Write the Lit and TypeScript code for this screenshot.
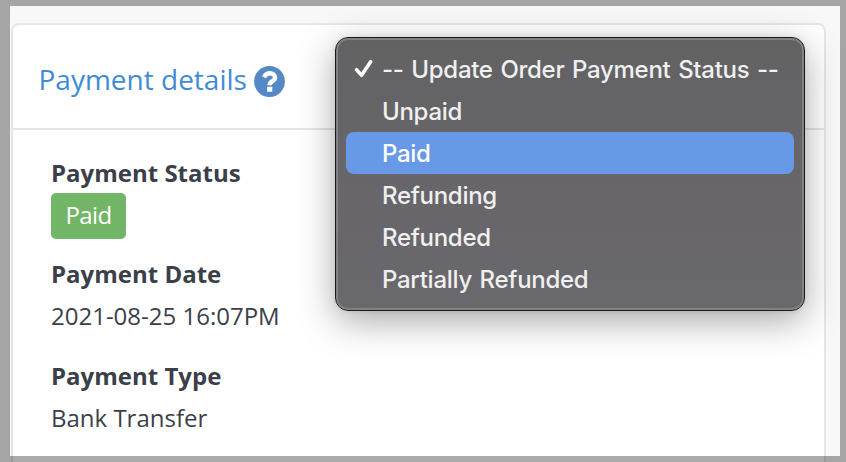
import { LitElement, html, css } from "lit";
import { customElement, state } from "lit/decorators.js";
import { classMap } from "lit/directives/class-map.js";

@customElement("status-menu")
class StatusMenu extends LitElement {
  @state() private active = 2;

  private options = [
    "-- Update Order Payment Status --",
    "Unpaid",
    "Paid",
    "Refunding",
    "Refunded",
    "Partially Refunded",
  ];

  static styles = css`
    :host {
      display: block;
      box-sizing: border-box;
      width: 470px;
      height: 274px;
      padding: 8px;
      border: 1px solid #19191b;
      border-radius: 13px;
      background: linear-gradient(#626263, #68666b 60%, #69686c) padding-box;
      box-shadow: inset 0 0 0 2px #828284, 0 10px 36px rgba(0, 0, 0, 0.34), 0 0 6px rgba(0, 0, 0, 0.08);
      font: 500 24px/42px Inter, sans-serif;
      color: #f0f0f0;
    }
    .list {
      padding: 2px;
    }
    .option {
      display: flex;
      align-items: center;
      height: 42px;
      border-radius: 8px;
      white-space: pre;
      letter-spacing: -0.29px;
      word-spacing: 1.6px;
    }
    .active {
      background: #6899e6;
      color: #fff;
    }
    .mark {
      flex: none;
      width: 36px;
      height: 42px;
    }
    .text {
      padding-top: 2px;
    }
    svg {
      display: block;
    }
  `;

  render() {
    return html`<div class="list">
      ${this.options.map(
        (o, i) => html`<div class=${classMap({ option: true, active: i === this.active })}>
          <span class="mark">${i === 0
            ? html`<svg width="36" height="42" viewBox="0 0 36 42"><path d="M10.5 21.7 15.6 27.3 24.8 13.6" fill="none" stroke="#fff" stroke-width="3.5" stroke-linecap="round" stroke-linejoin="round"/></svg>`
            : ""}</span><span class="text">${o}</span>
        </div>`
      )}
    </div>`;
  }
}

@customElement("app-root")
class AppRoot extends LitElement {
  static styles = css`
    :host {
      display: block;
      position: relative;
      box-sizing: border-box;
      width: 846px;
      height: 462px;
      padding: 23px 20px 0 11px;
      overflow: hidden;
      background: #f8f8f8;
      font-family: "Open Sans", sans-serif;
      color: #3a3f4a;
    }
    .card {
      box-sizing: border-box;
      height: 470px;
      border: 2px solid #e6e6e6;
      border-radius: 8px;
      background: #fff;
    }
    .head {
      display: flex;
      align-items: center;
      box-sizing: border-box;
      height: 105px;
      padding: 5px 0 0 25.5px;
      border-bottom: 2px solid #e6e6e6;
      color: #3f8bd6;
      font-size: 28px;
      line-height: 40px;
    }
    .title {
      width: 215.5px;
      white-space: nowrap;
    }
    .help {
      display: block;
      margin-top: 5px;
    }
    .body {
      padding: 22px 0 0 38px;
      font-size: 24px;
      line-height: 42px;
    }
    .label {
      font-weight: 700;
    }
    .group {
      height: 102px;
      white-space: nowrap;
    }
    .group:first-child {
      height: 101px;
    }
    .badge {
      box-sizing: border-box;
      width: 75px;
      height: 46px;
      margin-top: -1px;
      border-radius: 5px;
      background: #73b566;
      color: #fff;
      font-weight: 400;
      letter-spacing: -0.6px;
      line-height: 43px;
      text-align: center;
    }
    .menu {
      position: absolute;
      left: 335px;
      top: 37px;
    }
    .frame {
      position: absolute;
      inset: 0;
      border: solid rgba(0, 0, 0, 0.333);
      border-width: 6px 6px 6px 10px;
      pointer-events: none;
    }
  `;

  render() {
    return html`
      <section class="card">
        <header class="head">
          <span class="title">Payment details</span>
          <svg class="help" width="31" height="31" viewBox="0 0 31 31">
            <circle cx="15.5" cy="15.5" r="15.4" fill="#5488c7" />
            <path d="M9.9 11.2C11.3 8.6 13 7.3 15.8 7.3C18.8 7.3 21 9 21 11.7C21 15.3 15.6 15 15.6 19.2" fill="none" stroke="#fff" stroke-width="4.4" />
            <rect x="13.1" y="20.8" width="5.2" height="5" rx=".5" fill="#fff" />
          </svg>
        </header>
        <div class="body">
          <div class="group">
            <div class="label">Payment Status</div>
            <div class="badge">Paid</div>
          </div>
          <div class="group">
            <div class="label">Payment Date</div>
            <div>2021-08-25 16:07PM</div>
          </div>
          <div class="group">
            <div class="label">Payment Type</div>
            <div>Bank Transfer</div>
          </div>
        </div>
      </section>
      <status-menu class="menu"></status-menu>
      <div class="frame"></div>
    `;
  }
}
